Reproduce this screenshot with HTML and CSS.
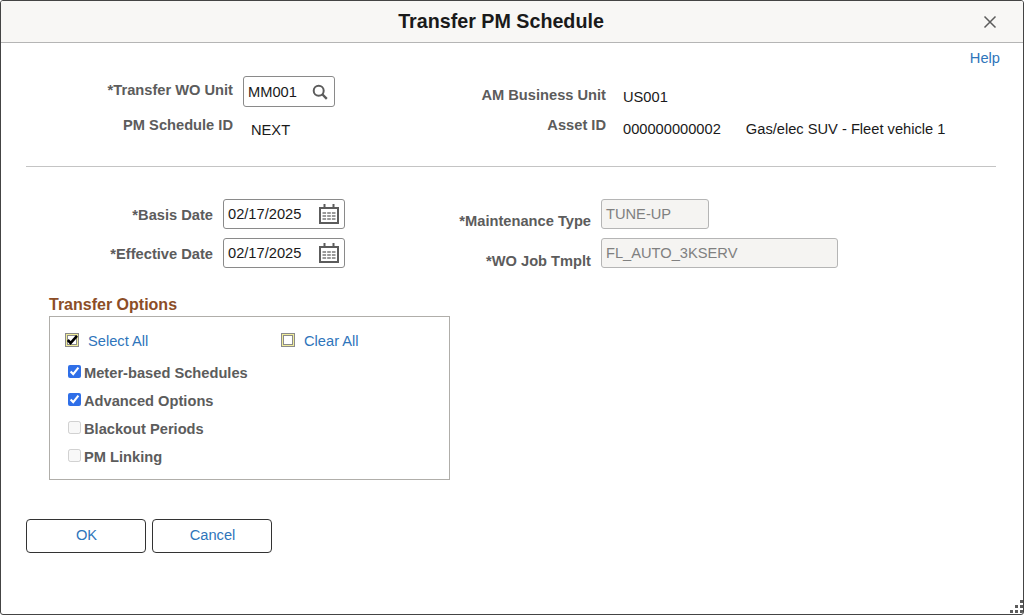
FILE: index.html
```html
<!DOCTYPE html>
<html lang="en">
<head>
    <meta charset="UTF-8">
    <meta name="viewport" content="width=device-width, initial-scale=1.0">
    <title>Transfer PM Schedule</title>
    <link rel="stylesheet" href="styles.css">
</head>
<body>
    <div class="dialog">
        <div class="dialog-header">
            <h1>Transfer PM Schedule</h1>
            <button type="button" class="close-button" aria-label="Close">
                <svg width="14" height="14" viewBox="0 0 14 14"><path d="M1.5 1.5 L12.5 12.5 M12.5 1.5 L1.5 12.5" stroke="#5c5c5c" stroke-width="1.5" fill="none"/></svg>
            </button>
        </div>

        <div class="dialog-body">
            <div class="help-row"><a href="#" class="link">Help</a></div>

            <div class="top-fields">
                <div class="top-left">
                    <div class="field-row wo-row">
                        <label class="label wo-label">*Transfer WO Unit</label>
                        <div class="input-box wo-input">
                            <span>MM001</span>
                            <svg width="16" height="16" viewBox="0 0 16 16"><circle cx="6.7" cy="6.7" r="5" stroke="#5c5c5c" stroke-width="2" fill="none"/><path d="M10.5 10.5 L14.8 14.8" stroke="#5c5c5c" stroke-width="2.4" fill="none"/></svg>
                        </div>
                    </div>
                    <div class="field-row schedule-row">
                        <label class="label wo-label">PM Schedule ID</label>
                        <span class="value next-value">NEXT</span>
                    </div>
                </div>
                <div class="top-right">
                    <div class="field-row business-row">
                        <label class="label asset-label">AM Business Unit</label>
                        <span class="value">US001</span>
                    </div>
                    <div class="field-row asset-row">
                        <label class="label asset-label">Asset ID</label>
                        <span class="value">000000000002</span>
                        <span class="value asset-descr">Gas/elec SUV - Fleet vehicle 1</span>
                    </div>
                </div>
            </div>

            <hr class="divider">

            <div class="date-fields">
                <div class="date-left">
                    <div class="field-row">
                        <label class="label date-label">*Basis Date</label>
                        <div class="input-box date-input">
                            <span>02/17/2025</span>
                            <svg class="cal-icon" width="20" height="20" viewBox="0 0 20 20"><use href="#calendar"/></svg>
                        </div>
                    </div>
                    <div class="field-row second-date">
                        <label class="label date-label">*Effective Date</label>
                        <div class="input-box date-input">
                            <span>02/17/2025</span>
                            <svg class="cal-icon" width="20" height="20" viewBox="0 0 20 20"><use href="#calendar"/></svg>
                        </div>
                    </div>
                </div>
                <div class="date-right">
                    <div class="field-row">
                        <label class="label type-label">*Maintenance Type</label>
                        <div class="input-box readonly type-input">TUNE-UP</div>
                    </div>
                    <div class="field-row second-type">
                        <label class="label type-label">*WO Job Tmplt</label>
                        <div class="input-box readonly job-input">FL_AUTO_3KSERV</div>
                    </div>
                </div>
            </div>

            <h2 class="group-title">Transfer Options</h2>
            <div class="group-box">
                <div class="select-row">
                    <div class="select-cell select-all">
                        <svg width="14" height="14" viewBox="0 0 14 14"><rect x="0.5" y="0.5" width="13" height="13" fill="#fff" stroke="#8a8a8a"/><rect x="1.5" y="1.5" width="11" height="11" fill="none" stroke="#f0ec9a"/><rect x="2.5" y="2.5" width="9" height="9" fill="none" stroke="#8a8a8a"/><path d="M2.8 7 L5.6 10 L12 2.8" stroke="#000" stroke-width="2.6" fill="none"/></svg>
                        <a href="#" class="link">Select All</a>
                    </div>
                    <div class="select-cell">
                        <svg width="14" height="14" viewBox="0 0 14 14"><rect x="0.5" y="0.5" width="13" height="13" fill="#fff" stroke="#8a8a8a"/><rect x="1.5" y="1.5" width="11" height="11" fill="none" stroke="#f0ec9a"/><rect x="2.5" y="2.5" width="9" height="9" fill="none" stroke="#8a8a8a"/></svg>
                        <a href="#" class="link">Clear All</a>
                    </div>
                </div>
                <label class="check-row"><input type="checkbox" checked>Meter-based Schedules</label>
                <label class="check-row"><input type="checkbox" checked>Advanced Options</label>
                <label class="check-row"><input type="checkbox" disabled>Blackout Periods</label>
                <label class="check-row"><input type="checkbox" disabled>PM Linking</label>
            </div>

            <div class="button-row">
                <button type="button" class="btn">OK</button>
                <button type="button" class="btn">Cancel</button>
            </div>
        </div>

        <div class="grip"><i></i><i></i><i></i><i></i><i></i><i></i></div>
    </div>

    <svg class="defs" width="0" height="0">
        <symbol id="calendar" viewBox="0 0 20 20">
            <path d="M1 4 H19 V19 H1 Z" fill="none" stroke="#5c5c5c" stroke-width="2"/>
            <path d="M5.5 0 V5 M14.5 0 V5" stroke="#5c5c5c" stroke-width="2"/>
            <path d="M3.5 9 H16.5 M3.5 12 H16.5 M3.5 15 H16.5" stroke="#9a9a9a" stroke-width="2" stroke-dasharray="3.6 1.1"/>
        </symbol>
    </svg>
</body>
</html>
```

FILE: styles.css
```css
* { box-sizing: border-box; }
html, body { margin: 0; padding: 0; }
body { font-family: "Liberation Sans", Arial, sans-serif; font-size: 14.67px; line-height: 16px; color: #1a1a1a; background-color: #fff; }
.defs { position: absolute; }

.dialog { position: relative; height: 615px; border: 1px solid #444; border-radius: 3px; overflow: hidden; background-color: #fff; }
.dialog-header { position: relative; height: 42px; padding: 0 22px 2px 0; background-color: #f8f7f5; border-bottom: 1px solid #b5b5b5; display: flex; align-items: center; justify-content: center; }
.dialog-header h1 { margin: 0; font-size: 19.7px; font-weight: bold; color: #1a1a1a; }
.close-button { position: absolute; right: 26px; top: 14px; padding: 0; width: 14px; height: 14px; border: none; background: none; display: block; }
.close-button svg { display: block; }

.dialog-body { padding: 0 22px 0 25px; }
.link { color: #2f75bb; text-decoration: none; }
.help-row { display: flex; justify-content: flex-end; height: 33px; padding: 7px 1px 0 0; }

.label { font-weight: bold; color: #5c5c5c; text-align: right; flex: none; }
.value { color: #1a1a1a; }
.field-row { display: flex; align-items: flex-start; }

.input-box { display: flex; align-items: center; justify-content: space-between; border: 1px solid #8a8a8a; border-radius: 3px; background-color: #fff; }

.top-fields { display: flex; }
.top-left { width: 395px; }
.wo-label { width: 207px; padding-top: 6px; }
.wo-input { width: 92px; height: 31px; margin-left: 10px; padding: 0 6px 0 4px; }
.schedule-row { margin-top: 10px; }
.schedule-row .wo-label { padding-top: 0; }
.next-value { margin-left: 18px; padding-top: 5px; }

.top-right { padding-top: 11px; }
.asset-label { width: 185px; }
.top-right .value { margin-left: 17px; padding-top: 2px; }
.asset-row { margin-top: 12px; }
.asset-row .value { padding-top: 4px; }
.top-right .asset-descr { margin-left: 25px; }

.divider { margin: 28px 5px 32px 0; border: none; border-top: 1px solid #c4c4c4; }

.date-fields { display: flex; }
.date-left { width: 395px; }
.date-label { width: 187px; padding-top: 8px; }
.date-input { width: 122px; height: 30px; margin-left: 10px; padding: 0 5px 0 4px; }
.second-date { margin-top: 9px; }
.cal-icon { display: block; }

.type-label { width: 170px; padding-top: 14px; }
.second-type .type-label { padding-top: 15px; }
.readonly { background-color: #f5f4f2; color: #808080; justify-content: flex-start; margin-left: 10px; padding: 0 4px; border-color: #b5b5b5; height: 30px; }
.type-input { width: 108px; }
.job-input { width: 237px; }
.second-type { margin-top: 9px; }

.group-title { margin: 27px 0 0 23px; font-size: 16px; font-weight: bold; color: #8c4d26; line-height: 18px; }
.group-box { width: 401px; height: 164px; margin: 2px 0 0 23px; border: 1px solid #b0aeaa; padding: 16px 0 0 15px; }
.select-row { display: flex; height: 14px; margin-bottom: 11px; }
.select-cell { display: flex; align-items: center; gap: 9px; }
.select-cell .link { padding-top: 2px; }
.select-all { width: 216px; }
.select-cell svg { display: block; flex: none; }
.check-row { display: flex; align-items: center; height: 28px; font-weight: bold; color: #5c5c5c; padding: 2px 0 0 3px; }
.check-row input { width: 13px; height: 13px; margin: 0 3px 4px 0; accent-color: #2f6fe8; }

.button-row { display: flex; gap: 6px; margin-top: 39px; }
.btn { width: 120px; height: 34px; background-color: #fff; border: 1px solid #333; border-radius: 4px; color: #2f75bb; font-family: inherit; font-size: 14.67px; padding: 0 0 2px 1px; }

.grip { position: absolute; right: 0; bottom: 1px; width: 13px; height: 13px; }
.grip i { position: absolute; width: 3px; height: 3px; background-color: #5c5c5c; }
.grip i:nth-child(1) { right: 0; top: 0; }
.grip i:nth-child(2) { right: 0; top: 5px; }
.grip i:nth-child(3) { right: 0; top: 10px; }
.grip i:nth-child(4) { right: 5px; top: 5px; }
.grip i:nth-child(5) { right: 5px; top: 10px; }
.grip i:nth-child(6) { right: 10px; top: 10px; }
```
